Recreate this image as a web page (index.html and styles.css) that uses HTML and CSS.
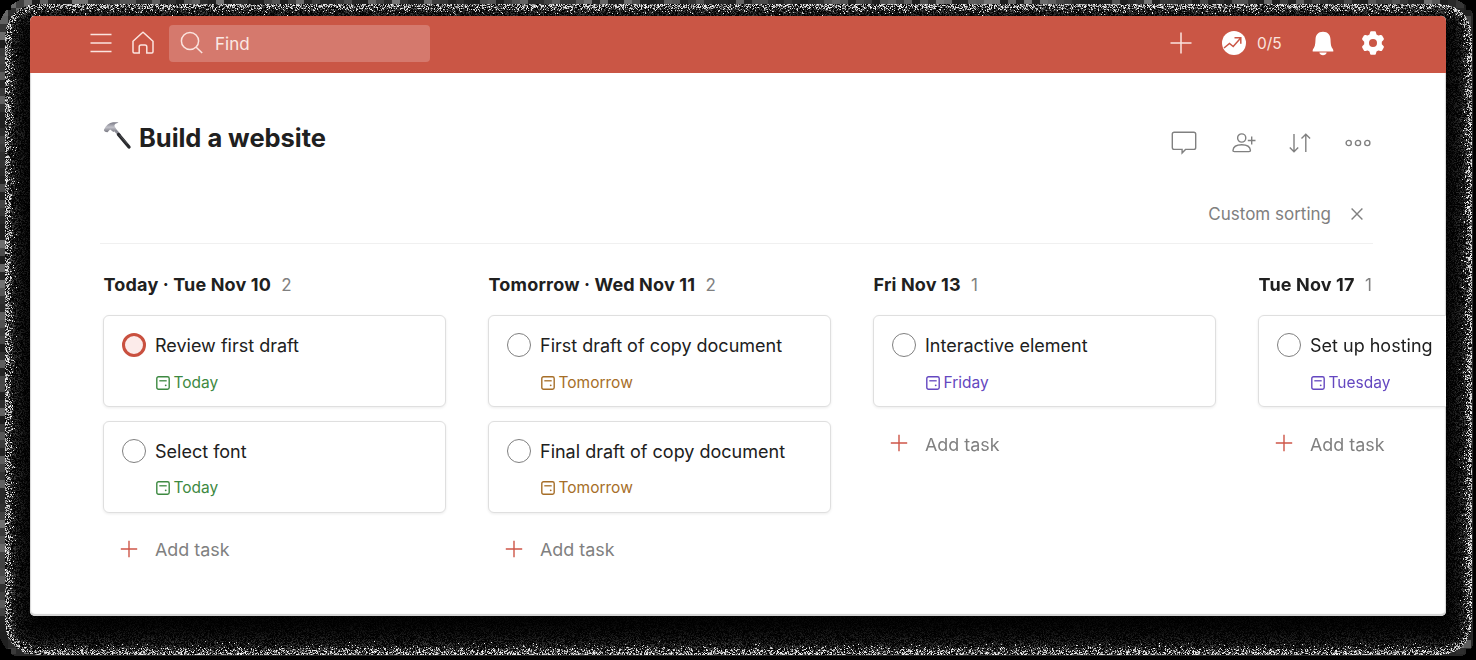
FILE: index.html
```html
<!DOCTYPE html>
<html lang="en">
<head>
<meta charset="utf-8">
<title>Build a website</title>
<link rel="stylesheet" href="styles.css">
</head>
<body>
<canvas class="grain" width="1476" height="660"></canvas>
<svg class="defs" aria-hidden="true">
  <symbol id="cal" viewBox="0 0 14 14"><rect x=".8" y=".8" width="12.400" height="12.400" rx="1.700" fill="none" stroke="currentColor" stroke-width="1.400"/><path d="M3.300 4.800h7.400" stroke="currentColor" stroke-width="1.300"/><circle cx="9.700" cy="9.300" r=".9" fill="currentColor"/></symbol>
  <symbol id="plus" viewBox="0 0 18 18"><path d="M9 .8v16.400M.8 9h16.400" stroke="currentColor" stroke-width="1.400"/></symbol>
</svg>
<main class="window">
  <header class="topbar">
    <svg class="menu" width="22" height="20" viewBox="0 0 22 20"><path d="M.5 1.500h21M.5 10h21M.5 18.500h21"/></svg>
    <svg class="home" width="24" height="24" viewBox="0 0 24 24"><path d="M11.300 1.700a1 1 0 0 1 1.400 0L22 10.300v10.500c0 .8-.4 1.200-1.200 1.200h-5V16c0-1.300-.6-2-1.800-2h-4c-1.200 0-1.800.7-1.800 2v6h-5c-.8 0-1.200-.4-1.200-1.200V10.300z"/></svg>
    <div class="search">
      <svg width="24" height="24" viewBox="0 0 24 24"><circle cx="10" cy="10" r="8.600"/><path d="M16.200 16.200l6 5.800"/></svg>
      <span>Find</span>
    </div>
    <div class="actions">
      <svg class="add" width="22" height="22" viewBox="0 0 22 22"><path d="M11 .5v21M.5 11h21"/></svg>
      <svg class="trend" width="24" height="24" viewBox="0 0 24 24"><circle cx="12" cy="12" r="12"/><path d="M2 17l5.500-4.500 3.700 3 7.500-8.500M12.500 6.700h6.300v6"/></svg>
      <span class="score">0/5</span>
      <svg class="bell" width="22" height="25" viewBox="0 0 22 25"><path d="M11 .8c5 0 7.300 3.300 7.500 7.500.2 5.200.5 7 2 9.300.7 1 1 1.800.8 3H.7c-.2-1.200.100-2 .8-3 1.500-2.300 1.800-4.100 2-9.300C3.700 4.100 6 .8 11 .8zM7.300 21.600h7.400c-.5 1.800-1.800 2.600-3.700 2.600s-3.200-.8-3.700-2.600z"/></svg>
      <svg class="gear" width="24" height="24" viewBox="0 0 24 24"><path fill-rule="evenodd" d="M10.300.3h3.400c.7 0 1 .4 1.200 1l.6 2.300 1.800 1 2.300-.6c.6-.2 1.100 0 1.500.6l1.600 2.700c.4.600.3 1.100-.2 1.600L20.800 10.700v2.600l1.700 1.800c.5.500.6 1 .2 1.600l-1.600 2.700c-.4.600-.9.800-1.500.6l-2.300-.6-1.800 1-.6 2.300c-.2.600-.5 1-1.200 1h-3.400c-.7 0-1-.4-1.200-1l-.6-2.300-1.800-1-2.300.6c-.6.200-1.100 0-1.500-.6l-1.600-2.700c-.4-.6-.3-1.100.2-1.600l1.700-1.800v-2.600L1.500 8.900c-.5-.5-.6-1-.2-1.600l1.600-2.700c.4-.6.9-.8 1.500-.6l2.300.6 1.800-1 .6-2.300c.2-.6.5-1 1.200-1zM12 8a4 4 0 1 0 0 8 4 4 0 0 0 0-8z"/></svg>
    </div>
  </header>

  <section class="project">
    <h1>
      <svg width="30" height="30" viewBox="0 0 30 30"><defs><linearGradient id="steel" x1="0" y1="0" x2="0" y2="1"><stop offset="0" stop-color="#777783"/><stop offset=".5" stop-color="#c2c2ca"/><stop offset="1" stop-color="#777780"/></linearGradient></defs><path d="M12 9l5 5.500" stroke="#8b8b94" stroke-width="2.800"/><path d="M.8 9C3 4.300 6.200 1.700 10 1.300c2-.2 4.600-.1 5.500.4-2.600.5-4 1.400-4.100 3.200l2 3.300-3 2.800-3.300-2.500-2.600 2.700C3.400 11.400 1.300 10.700.8 9z" fill="url(#steel)"/><path d="M15.500 13.500L26 26" stroke="#292a2d" stroke-width="3.400" stroke-linecap="round"/><path d="M16.500 14l8 9" stroke="#606166" stroke-width=".7"/></svg>
      <span>Build a website</span>
    </h1>
    <div class="tools">
      <svg class="comment" width="26" height="24" viewBox="0 0 26 24"><path d="M3.200 1.200h19.600q1.900 0 1.900 1.900v13.400q0 1.900-1.900 1.900h-8.300l-3.400 3.500V18.400H3.200q-1.900 0-1.900-1.900V3.100q0-1.900 1.900-1.900z"/></svg>
      <svg class="person" width="24" height="22" viewBox="0 0 24 22"><circle cx="9.700" cy="6" r="4.100"/><path d="M1 18.300c.3-3.500 3.300-5.600 8.700-5.600s8.400 2.100 8.700 5.600c.1.900-.5 1.300-1.400 1.300H2.400C1.500 19.600.9 19.200 1 18.300zM15.800 8.500h7.700M19.700 4.500v8"/></svg>
      <svg class="sort" width="22" height="20" viewBox="0 0 22 20"><path d="M5 1v17.500M.8 14.500L5 18.700l4.200-4.200M16.800 19V1.500M12.500 5.500l4.300-4.200 4.300 4.200"/></svg>
      <svg class="more" width="26" height="8" viewBox="0 0 26 8"><circle cx="3.700" cy="4" r="2.600"/><circle cx="13" cy="4" r="2.600"/><circle cx="22.300" cy="4" r="2.600"/></svg>
    </div>
  </section>

  <div class="sorting">
    <span>Custom sorting</span>
    <svg width="12" height="12" viewBox="0 0 12 12"><path d="M.6.6l10.800 10.800M11.400.6L.6 11.400"/></svg>
  </div>

  <section class="board">
    <div class="column">
      <h2>Today · Tue Nov 10 <small>2</small></h2>
      <article class="card"><i class="check urgent"></i><div><p class="task">Review first draft</p><p class="due today"><svg><use href="#cal"/></svg>Today</p></div></article>
      <article class="card"><i class="check"></i><div><p class="task">Select font</p><p class="due today"><svg><use href="#cal"/></svg>Today</p></div></article>
      <div class="new"><svg><use href="#plus"/></svg><span>Add task</span></div>
    </div>
    <div class="column">
      <h2>Tomorrow · Wed Nov 11 <small>2</small></h2>
      <article class="card"><i class="check"></i><div><p class="task">First draft of copy document</p><p class="due tomorrow"><svg><use href="#cal"/></svg>Tomorrow</p></div></article>
      <article class="card"><i class="check"></i><div><p class="task">Final draft of copy document</p><p class="due tomorrow"><svg><use href="#cal"/></svg>Tomorrow</p></div></article>
      <div class="new"><svg><use href="#plus"/></svg><span>Add task</span></div>
    </div>
    <div class="column">
      <h2>Fri Nov 13 <small>1</small></h2>
      <article class="card"><i class="check"></i><div><p class="task">Interactive element</p><p class="due week"><svg><use href="#cal"/></svg>Friday</p></div></article>
      <div class="new"><svg><use href="#plus"/></svg><span>Add task</span></div>
    </div>
    <div class="column">
      <h2>Tue Nov 17 <small>1</small></h2>
      <article class="card"><i class="check"></i><div><p class="task">Set up hosting</p><p class="due week"><svg><use href="#cal"/></svg>Tuesday</p></div></article>
      <div class="new"><svg><use href="#plus"/></svg><span>Add task</span></div>
    </div>
  </section>
</main>
<script src="grain.js"></script>
</body>
</html>
```

FILE: styles.css
```css
* { box-sizing: border-box; }
body { margin: 0; width: 1476px; height: 660px; overflow: hidden; background: #000; padding: 16px 30px 44px; font-family: Inter, "Liberation Sans", sans-serif; color: #202020; }
h1, h2, p { margin: 0; }
svg { flex: none; fill: none; display: block; }
.grain { position: absolute; left: 0; top: 0; z-index: -1; }
.defs { position: absolute; width: 0; height: 0; }
.window { width: 1416px; height: 600px; background: #fff; border-radius: 5px; overflow: hidden; box-shadow: inset 0 0 1px 1px #d8d8d8, inset 0 -2px 1px #d0d0d0; }

.topbar { height: 56.500px; background: #ca5645; display: flex; align-items: center; padding: 0 61px 2px 59.500px; color: #fff; }
.menu, .home, .add { stroke: #fbe4df; stroke-width: 1.500; }
.home { margin-left: 19.500px; }
.search { width: 261px; height: 37px; margin-left: 14px; background: #d5796d; border-radius: 4px; display: flex; align-items: center; padding-left: 11px; gap: 11px; font-size: 17px; color: #fbe9e5; }
.search svg { stroke: #fbe4df; stroke-width: 1.500; }
.search span { padding-top: 2px; }
.actions { margin-left: auto; display: flex; align-items: center; }
.trend { margin-left: 30px; }
.trend circle { fill: #fff; }
.trend path { stroke: #ca5645; stroke-width: 1.500; }
.score { margin-left: 11px; width: 25px; font-size: 15.500px; color: #fbe4df; white-space: nowrap; }
.bell { margin-left: 30px; fill: #fff; }
.gear { margin-left: 27px; fill: #fff; }

.project { display: flex; justify-content: space-between; padding: 48.500px 75.500px 0 73px; height: 126px; }
h1 { display: flex; gap: 6px; font-size: 25.500px; line-height: 34px; font-weight: 700; letter-spacing: -.05px; height: 34px; }
.tools { display: flex; align-items: center; height: 44px; stroke: #808080; stroke-width: 1.400; }
.person { margin-left: 35px; }
.sort { margin-left: 33px; }
.more { margin-left: 34px; }

.sorting { display: flex; align-items: center; justify-content: flex-end; gap: 20px; height: 45px; margin: 0 73px 0 70px; padding: 0 10px 13px 0; border-bottom: 1px solid #f0f0f0; font-size: 17px; color: #808080; }
.sorting svg { stroke: #808080; stroke-width: 1.400; }

.board { display: flex; gap: 42px; padding: 27.500px 0 0 73px; width: 1600px; }
.column { width: 343px; flex: none; }
h2 { font-size: 18px; line-height: 27px; font-weight: 700; height: 44px; letter-spacing: .2px; word-spacing: -.2px; padding-left: .5px; white-space: nowrap; }
h2 small { font-size: 17px; font-weight: 400; color: #808080; margin-left: 6px; }
.card { height: 92px; margin-bottom: 13.500px; border: 1.500px solid #dfdfdf; border-radius: 6px; box-shadow: 0 1px 3px rgba(0,0,0,.08); display: flex; gap: 9.500px; padding: 16px 0 0 17.500px; background: #fff; }
.check { width: 24px; height: 24px; margin-top: 1px; border: 1.500px solid #808080; border-radius: 50%; flex: none; }
.urgent { border: 3px solid #c9503f; background: #fcebea; }
.task { font-size: 18px; line-height: 27px; white-space: nowrap; }
.due { display: flex; align-items: center; gap: 4px; margin-top: 13.500px; padding-left: .5px; font-size: 15.500px; line-height: 20px; }
.due svg { width: 14px; height: 14px; }
.today { color: #3d8941; }
.tomorrow { color: #a66e28; }
.week { color: #6447c0; }
.new { display: flex; align-items: center; gap: 17px; padding-left: 17px; margin-top: 23px; height: 26px; font-size: 17.900px; color: #808080; }
.new span { padding-top: 2px; }
.new svg { width: 18px; height: 18px; color: #ce5648; }
```

FILE: grain.js
```js
// Speckled halo around the window, with coarse dark blocks beyond it.
const canvas = document.querySelector('.grain');
const ctx = canvas.getContext('2d');
const W = canvas.width, H = canvas.height;
const img = ctx.createImageData(W, H);
let seed = 7;
const rand = () => (seed = (seed * 1664525 + 1013904223) >>> 0) / 4294967296;
const blocks = [];
for (let i = 0; i < 185 * 83; i++) blocks.push(30 + Math.pow(rand(), 2) * 90);
const L = 5, T = 4, R = 1471, B = 654, rad = 30;
for (let y = 0; y < H; y++) {
  for (let x = 0; x < W; x++) {
    const qx = Math.max(L + rad - x, x - R + rad);
    const qy = Math.max(T + rad - y, y - B + rad);
    const s = qx > 0 && qy > 0 ? rad - Math.hypot(qx, qy) : rad - Math.max(qx, qy);
    let v = 0;
    if (s >= 0) {
      const a = rand(), b = rand();
      v = a < 0.45 * Math.exp(-s * s / 30) ? 255 * (0.6 + 0.4 * b) : 150 * b * b * Math.exp(-s / 12);
    } else if (s > -8 && !(qx > 24 && qy > 24)) {
      v = blocks[(y >> 3) * 185 + (x >> 3)];
      if (x > 1470 || y > 653) v = 40;
      if (y > 655 || x > 1472) v = 0;
    }
    const i = (y * W + x) * 4;
    img.data[i] = img.data[i + 1] = img.data[i + 2] = v;
    img.data[i + 3] = 255;
  }
}
ctx.putImageData(img, 0, 0);
```
